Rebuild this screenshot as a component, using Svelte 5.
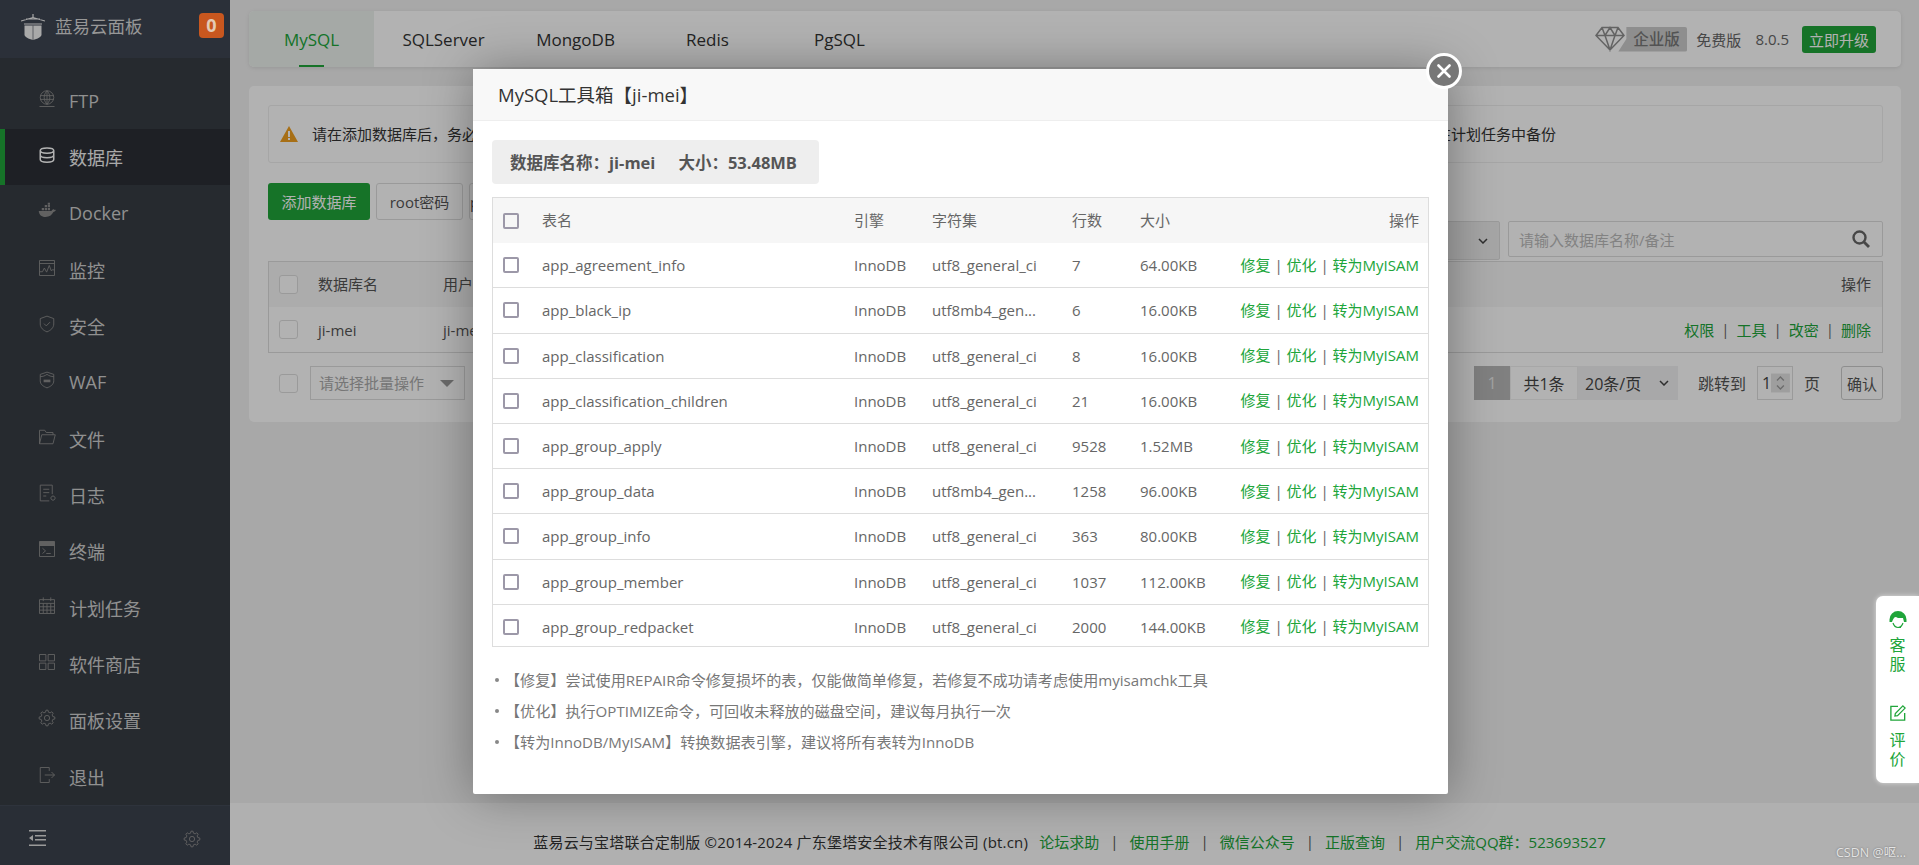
<script>
  function gear(cx = 12, cy = 12, ro = 10.5, ri = 8, n = 8) {
    let d = '';
    for (let i = 0; i < n; i++) {
      const s = (i * 2 * Math.PI) / n;
      const w = Math.PI / n;
      const pts = [[ri, s - w * 0.62], [ro, s - w * 0.32], [ro, s + w * 0.32], [ri, s + w * 0.62]];
      for (const [r, a] of pts) {
        d += (d ? 'L' : 'M') + (cx + r * Math.cos(a)).toFixed(2) + ' ' + (cy + r * Math.sin(a)).toFixed(2);
      }
    }
    return d + `zM${cx - 3.5} ${cy}a3.500 3.500 0 1 0 7 0a3.500 3.500 0 1 0-7 0z`;
  }

  const menu = [
    { name: 'FTP', d: 'M12 1a9 9 0 1 0 0 18a9 9 0 0 0 0-18zM3 7.500h18M3 12.500h18M12 1v18M12 1c-5 5-5 13 0 18M12 1c5 5 5 13 0 18M2 22h20' },
    { name: '数据库', active: true, d: 'M3 6c0-2 4-3.500 9-3.500s9 1.500 9 3.500v12c0 2-4 3.500-9 3.500s-9-1.500-9-3.500zM3 6c0 2 4 3.500 9 3.500s9-1.500 9-3.500M3 12c0 2 4 3.500 9 3.500s9-1.500 9-3.500' },
    { name: 'Docker', d: '', f: 'M1 12h17c.5-2 2-2.500 3-2.500.4 1 1.500 1.200 3 .9-.8 2-2 2.700-3.500 3C18.500 17.500 15 20 10 20 4.500 20 1.500 17 1 12zM5 8h3v3H5zM9 8h3v3H9zM13 8h3v3h-3zM9 4h3v3H9zM13 4h3v3h-3zM13 1h3v2.500h-3z' },
    { name: '监控', d: 'M2 2h20v20H2zM2 6h20M2 17h4l2.500-5 3 5.500 3.500-9 2.500 7 1.500-1h3' },
    { name: '安全', d: 'M12 1.500l9 3.300v7.200c0 5-4 8.500-9 10.500-5-2-9-5.500-9-10.500V4.800zM8 11.500l3 3 5-5' },
    { name: 'WAF', d: 'M12 1.500l9 3v8.500c0 5-4 7.500-9 9.500-5-2-9-4.500-9-9.500V4.500zM3 7.500c3.500 0 6-1 9-3 3 2 5.500 3 9 3', f: 'M7.500 11.500h9v3.500h-9z' },
    { name: '文件', d: 'M2 21V3h7l2 3h9v3M2 21l3-12h18l-3 12z' },
    { name: '日志', d: 'M3 1.500h16v12M3 1.500v21h12M7 7h8M7 11.500h8M7 16h4M20 16a2.800 2.800 0 1 0 .01 0z' },
    { name: '终端', d: 'M2 2h20v20H2zM6 11l4 3.500-4 3.500M11 18h6', f: 'M2 2h20v6H2z' },
    { name: '计划任务', d: 'M2 3.500h20v18.500H2zM2 8.500h20M2 13h20M2 17.500h20M7 .5v5M17 .5v5M7 8.500v13M12 8.500v13M17 8.500v13' },
    { name: '软件商店', d: 'M2 2h8.500v8.500H2zM13.500 2H22v8.500h-8.500zM2 13.500h8.500V22H2zM13.500 13.500H22V22h-8.500z' },
    { name: '面板设置', d: gear() },
    { name: '退出', d: 'M15 6.500V2H3v20h12v-4.500M9 12h13M18 8l4 4-4 4' }
  ];

  const tabs = ['MySQL', 'SQLServer', 'MongoDB', 'Redis', 'PgSQL'];
  const rows = [
    ['app_agreement_info', 'utf8_general_ci', '7', '64.00KB'],
    ['app_black_ip', 'utf8mb4_gen...', '6', '16.00KB'],
    ['app_classification', 'utf8_general_ci', '8', '16.00KB'],
    ['app_classification_children', 'utf8_general_ci', '21', '16.00KB'],
    ['app_group_apply', 'utf8_general_ci', '9528', '1.52MB'],
    ['app_group_data', 'utf8mb4_gen...', '1258', '96.00KB'],
    ['app_group_info', 'utf8_general_ci', '363', '80.00KB'],
    ['app_group_member', 'utf8_general_ci', '1037', '112.00KB'],
    ['app_group_redpacket', 'utf8_general_ci', '2000', '144.00KB']
  ];
  const notes = [
    '【修复】尝试使用REPAIR命令修复损坏的表，仅能做简单修复，若修复不成功请考虑使用myisamchk工具',
    '【优化】执行OPTIMIZE命令，可回收未释放的磁盘空间，建议每月执行一次',
    '【转为InnoDB/MyISAM】转换数据表引擎，建议将所有表转为InnoDB'
  ];
  const footLinks = ['论坛求助', '使用手册', '微信公众号', '正版查询'];
  const gearPath = gear();
</script>

<div class="page">
  <aside class="side">
    <div class="brand">
      <svg class="logo" viewBox="0 0 24 26" width="24" height="26">
        <path d="M0 7 12 3.500 24 7M3 10h18M12 0v3.500M5 5h14" fill="none" stroke="#f2f2f2" stroke-width="1.200" />
        <path d="M3.500 11.500h17v9c0 2.500-4 4.500-8.500 5.500-4.500-1-8.500-3-8.500-5.500z" fill="#f2f2f2" />
        <path d="M12 11.500V26" stroke="#3d4453" stroke-width=".6" />
      </svg>
      <span class="brand-name">蓝易云面板</span>
      <span class="badge">0</span>
    </div>
    <nav class="menu">
      {#each menu as m}
        <div class="item" class:active={m.active}>
          <svg class="ico" viewBox="0 0 24 24" width="18" height="18">
            {#if m.f}<path d={m.f} class="solid" />{/if}
            {#if m.d}<path d={m.d} class="line" />{/if}
          </svg>
          <span>{m.name}</span>
        </div>
      {/each}
    </nav>
    <div class="side-foot">
      <svg viewBox="0 0 17 17" width="17" height="17">
        <path d="M0 0h17v1.500H0zM6 5h11v1.500H6zM6 9h11v1.500H6zM0 14.500h17V16H0zM4 5v6L0 8z" fill="#ddd" />
      </svg>
      <svg viewBox="0 0 24 24" width="18" height="18"><path d={gearPath} class="line" /></svg>
    </div>
  </aside>

  <main class="main">
    <div class="body">
      <header class="topbar">
        <div class="tabs">
          {#each tabs as t, i}
            <div class="tab" class:on={i === 0}>{t}</div>
          {/each}
        </div>
        <div class="ver">
          <div class="ent">
            <svg viewBox="0 0 30 26" width="30" height="26">
              <path d="M7 1.500h16l6 8-14 14.500L1 9.500zM1 9.500h28M10 9.500 15 24l5-14.500M7 1.500l3 8 5-8 5 8 3-8" fill="#fff" stroke="#8f8f8f" stroke-width="1.500" />
            </svg>
            <span class="ent-tag">企业版</span>
          </div>
          <span class="free">免费版</span>
          <span class="num">8.0.5</span>
          <button class="upgrade">立即升级</button>
        </div>
      </header>

      <section class="card">
        <div class="alert">
          <svg viewBox="0 0 18 16" width="18" height="16"><path d="M9 0l9 16H0z" fill="#f0a020" /><path d="M8 5h2v6H8zM8 12h2v2H8z" fill="#fff" /></svg>
          <span class="up">请在添加数据库后，务必</span>
          <span class="tail up">在计划任务中备份</span>
        </div>
        <div class="btns">
          <button class="primary">添加数据库</button>
          <button class="plain">root密码</button>
          <button class="plain">phpMyAdmin</button>
        </div>
        <div class="filter">
          <div class="cat"><svg viewBox="0 0 10 6" width="10" height="6"><path d="M1 1l4 4 4-4" fill="none" stroke="#444" stroke-width="1.500" /></svg></div>
          <div class="search">
            <span>请输入数据库名称/备注</span>
            <svg viewBox="0 0 18 18" width="18" height="18"><circle cx="7.500" cy="7.500" r="6" fill="none" stroke="#666" stroke-width="2.400" /><path d="M12 12l5 5" stroke="#666" stroke-width="2.800" /></svg>
          </div>
        </div>
        <div class="dbtable">
          <div class="dbrow head">
            <i class="box"></i><span class="c-name up">数据库名</span><span class="c-user up">用户名</span><span class="c-op up">操作</span>
          </div>
          <div class="dbrow">
            <i class="box"></i><span class="c-name">ji-mei</span><span class="c-user">ji-mei</span>
            <span class="c-op links"><a href="#a">权限</a><b>|</b><a href="#a">工具</a><b>|</b><a href="#a">改密</a><b>|</b><a href="#a">删除</a></span>
          </div>
        </div>
        <div class="pager">
          <i class="box"></i>
          <div class="batch"><span class="up">请选择批量操作</span><em></em></div>
          <div class="pages">
            <span class="cur">1</span>
            <span class="total">共1条</span>
            <span class="size">20条/页<svg viewBox="0 0 10 6" width="10" height="6"><path d="M1 1l4 4 4-4" fill="none" stroke="#444" stroke-width="1.500" /></svg></span>
            <span class="jump">跳转到</span>
            <span class="pageinput">1<svg viewBox="0 0 22 22" width="22" height="22"><path d="M0 0h22v22H0z" fill="#e2e2e2" /><path d="M7 8l4-4 4 4M7 14l4 4 4-4" fill="none" stroke="#999" stroke-width="1.500" /></svg></span>
            <span class="ye">页</span>
            <button class="ok">确认</button>
          </div>
        </div>
      </section>
    </div>
    <footer class="foot">
      <span class="foot-main">蓝易云与宝塔联合定制版 ©2014-2024 广东堡塔安全技术有限公司 (bt.cn)</span>
      {#each footLinks as l}
        <a href="#f">{l}</a><b>|</b>
      {/each}
      <a href="#f">用户交流QQ群：523693527</a>
    </footer>
  </main>

  <div class="shade"></div>

  <div class="dialog">
    <div class="dlg-title">MySQL工具箱【ji-mei】</div>
    <button class="close" aria-label="关闭">
      <svg viewBox="0 0 14 14" width="14" height="14"><path d="M1.500 1.500l11 11M12.500 1.500l-11 11" stroke="#fff" stroke-width="2.600" stroke-linecap="round" /></svg>
    </button>
    <div class="dlg-body">
      <div class="info">
        <span>数据库名称：ji-mei</span>
        <span>大小：53.48MB</span>
      </div>
      <div class="tool">
        <div class="trow thead">
          <i class="cb"></i><span class="up">表名</span><span class="up">引擎</span><span class="up">字符集</span><span class="up">行数</span><span class="up">大小</span><span class="op up">操作</span>
        </div>
        {#each rows as r}
          <div class="trow">
            <i class="cb"></i><span>{r[0]}</span><span>InnoDB</span><span>{r[1]}</span><span>{r[2]}</span><span>{r[3]}</span>
            <span class="op up"><a href="#t">修复</a> | <a href="#t">优化</a> | <a href="#t">转为MyISAM</a></span>
          </div>
        {/each}
      </div>
      <ul class="notes">
        {#each notes as n}<li>{n}</li>{/each}
      </ul>
    </div>
  </div>

  <aside class="float">
    <div class="fl-item">
      <svg viewBox="0 0 18 18" width="18" height="18">
        <path d="M9 0a8.500 8.500 0 0 0-8.500 8.500V11h2.500c1-3 2-5 4-5 2 1.500 5 1 7 1l1 4h2.500V8.500A8.500 8.500 0 0 0 9 0z" fill="#20a53a" />
        <path d="M4 12c1 3 3 4.500 5 4.500s4-1.500 5-4.500M9 16.500h3" fill="none" stroke="#20a53a" stroke-width="1.200" />
      </svg>
      <span>客<br />服</span>
    </div>
    <div class="fl-item">
      <svg viewBox="0 0 18 18" width="16" height="16">
        <path d="M9 1.500H1v15.500h15.500V9" fill="none" stroke="#20a53a" stroke-width="1.500" />
        <path d="M14.500 1 17 3.500 8.500 12 5.500 12.500 6 9.500z" fill="none" stroke="#20a53a" stroke-width="1.400" />
      </svg>
      <span>评<br />价</span>
    </div>
  </aside>

  <div class="mark">CSDN @呕...</div>
</div>

<style>
  :global(body) {
    margin: 0;
    overflow: hidden;
  }
  .page {
    width: 1919px;
    height: 865px;
    display: flex;
    position: relative;
    overflow: hidden;
    font-family: "Open Sans", "Noto Sans CJK SC", sans-serif;
    font-size: 15px;
    color: #555;
    background: #f1f1f1;
  }
  a {
    text-decoration: none;
  }
  button {
    font: inherit;
    cursor: pointer;
  }
  .up {
    margin-top: -2px;
  }

  /* sidebar */
  .side {
    width: 230px;
    flex: none;
    display: flex;
    flex-direction: column;
    background: #373d44;
  }
  .brand {
    height: 58px;
    flex: none;
    padding: 0 6px 0 21px;
    display: flex;
    align-items: center;
    background: #3e4552;
    box-sizing: border-box;
  }
  .logo {
    flex: none;
    margin-top: -5px;
  }
  .brand-name {
    margin-left: 10px;
    margin-top: -8px;
    font-size: 17.500px;
    color: #d8d8d8;
  }
  .badge {
    position: relative;
    z-index: 3;
    margin: -8px 0 0 auto;
    width: 25px;
    height: 25px;
    line-height: 25px;
    text-align: center;
    border-radius: 4px;
    background: #c8571f;
    color: #e4cbb6;
    font-size: 18px;
    font-weight: 700;
  }
  .menu {
    flex: 1;
    padding-top: 14.500px;
  }
  .item {
    height: 56.33px;
    padding-left: 38px;
    display: flex;
    align-items: center;
    box-sizing: border-box;
    font-size: 18px;
    color: #cfcfcf;
  }
  .item span {
    margin-left: 13px;
  }
  .ico {
    flex: none;
    margin-top: -4px;
  }
  .line {
    fill: none;
    stroke: #8c8c8c;
    stroke-width: 1.200;
  }
  .solid {
    fill: #8c8c8c;
  }
  .item.active {
    background: #2b2f36;
    border-left: 5px solid #20a53a;
    padding-left: 33px;
    color: #f2f2f2;
  }
  .item.active .line {
    stroke: #fff;
    stroke-width: 2;
  }
  .side-foot {
    height: 62px;
    flex: none;
    padding: 5px 29px 0;
    display: flex;
    justify-content: space-between;
    align-items: center;
    box-sizing: border-box;
    background: #3c424e;
    border-top: 1px solid #434a56;
  }

  /* main */
  .main {
    flex: 1;
    display: flex;
    flex-direction: column;
    min-width: 0;
  }
  .body {
    flex: 1;
    padding: 11px 18px 0 19px;
  }
  .topbar {
    height: 56px;
    display: flex;
    justify-content: space-between;
    align-items: center;
    padding-right: 25px;
    background: #fff;
    border-radius: 5px;
    box-shadow: 0 1px 4px rgba(0, 0, 0, 0.1);
  }
  .tabs {
    display: flex;
    gap: 7px;
    height: 100%;
  }
  .tab {
    width: 125px;
    display: flex;
    align-items: center;
    justify-content: center;
    font-size: 17px;
    color: #333;
    box-sizing: border-box;
  }
  .tab.on {
    position: relative;
    color: #20a53a;
    background: #ecf3ee;
    border-radius: 5px 0 0 5px;
  }
  .tab.on::after {
    content: "";
    position: absolute;
    left: 50px;
    bottom: 0;
    width: 25px;
    height: 2px;
    background: #20a53a;
  }
  .ver {
    display: flex;
    align-items: center;
    font-size: 15px;
    color: #666;
  }
  .ent {
    display: flex;
    align-items: center;
    position: relative;
  }
  .ent svg {
    position: relative;
    z-index: 1;
  }
  .ent-tag {
    margin-left: -7px;
    padding: 0 7px 0 15px;
    height: 25px;
    line-height: 25px;
    width: 47px;
    background: #cccccc;
    color: #777;
    font-size: 15.500px;
    font-weight: 500;
    box-sizing: content-box;
    border-radius: 0 2px 2px 0;
    clip-path: polygon(8px 0, 100% 0, 100% 100%, 0 100%, 8px 50%);
  }
  .free {
    margin-left: 9px;
  }
  .num {
    margin-left: 14px;
  }
  .upgrade {
    margin-left: 13px;
    width: 74px;
    height: 27px;
    padding: 0;
    border: 0;
    border-radius: 3px;
    background: #20a53a;
    color: #fff;
    font-size: 15px;
  }

  .card {
    margin-top: 19px;
    height: 336px;
    padding: 19px 18px 0 19px;
    box-sizing: border-box;
    background: #fff;
    border-radius: 5px;
  }
  .alert {
    height: 58px;
    padding: 0 326px 0 11px;
    display: flex;
    align-items: center;
    gap: 14px;
    border: 1px solid #eee;
    border-radius: 3px;
    box-sizing: border-box;
    background: #fff;
    color: #333;
  }
  .tail {
    margin-left: auto;
  }
  .btns {
    margin-top: 20px;
    display: flex;
    gap: 6px;
    height: 37px;
  }
  .btns button {
    height: 37px;
    padding: 0;
    border-radius: 3px;
    font-size: 15px;
  }
  .primary {
    width: 102px;
    border: 0;
    background: #20a53a;
    color: #fff;
  }
  .plain {
    width: 87px;
    border: 1px solid #ddd;
    background: #fff;
    color: #555;
  }
  .filter {
    height: 41px;
    display: flex;
    justify-content: flex-end;
    gap: 8px;
    align-items: flex-start;
    padding-top: 1px;
    box-sizing: border-box;
  }
  .cat {
    width: 120px;
    height: 39px;
    display: flex;
    align-items: center;
    justify-content: flex-end;
    padding-right: 11px;
    box-sizing: border-box;
    background: #eee;
    border: 1px solid #ddd;
    border-radius: 2px;
  }
  .search {
    width: 375px;
    height: 36px;
    padding: 0 12px 0 10px;
    display: flex;
    justify-content: space-between;
    align-items: center;
    border: 1px solid #ddd;
    box-sizing: border-box;
    border-radius: 2px;
    color: #bbb;
  }
  .dbtable {
    border: 1px solid #ddd;
  }
  .dbrow {
    height: 45px;
    display: flex;
    align-items: center;
    padding: 0 11px 0 10px;
    position: relative;
  }
  .dbrow.head {
    background: #f6f6f6;
  }
  .box {
    flex: none;
    width: 19px;
    height: 19px;
    border: 1px solid #ddd;
    border-radius: 3px;
    box-sizing: border-box;
    background: #fff;
  }
  .c-name {
    margin-left: 20px;
    width: 125px;
  }
  .c-user {
    flex: 1;
  }
  .links {
    display: flex;
    gap: 7px;
    color: #666;
  }
  .links a {
    color: #20a53a;
  }
  .links b {
    font-weight: 400;
  }
  .pager {
    margin-top: 13px;
    height: 34px;
    display: flex;
    align-items: center;
    padding-left: 11px;
  }
  .batch {
    margin-left: 12px;
    width: 155px;
    height: 34px;
    padding: 0 10px 0 8px;
    display: flex;
    align-items: center;
    justify-content: space-between;
    border: 1px solid #ddd;
    box-sizing: border-box;
    color: #aaa;
  }
  .batch em {
    border: 7px solid transparent;
    border-top-color: #999;
    border-bottom: 0;
  }
  .pages {
    margin-left: auto;
    display: flex;
    align-items: center;
    height: 34px;
  }
  .pages > span {
    height: 34px;
    display: flex;
    align-items: center;
    box-sizing: border-box;
    font-size: 16px;
  }
  .cur {
    width: 36px;
    justify-content: center;
    background: #b8b8b8;
    color: #e8e8e8;
  }
  .total {
    width: 68px;
    justify-content: center;
    border: 1px solid #f0f0f0;
    color: #444;
  }
  .size {
    width: 100px;
    justify-content: space-between;
    padding: 0 9px 0 7px;
    background: #f1f1f3;
    color: #444;
  }
  .jump {
    margin-left: 20px;
    width: 48px;
    white-space: nowrap;
  }
  .pageinput {
    width: 36px;
    margin-left: 11px;
    padding: 0 2px 0 4px;
    border: 1px solid #ddd;
    justify-content: space-between;
    color: #444;
  }
  .ye {
    margin-left: 11px;
    width: 16px;
  }
  .ok {
    margin-left: 21px;
    width: 42px;
    height: 34px;
    padding: 0;
    border: 1px solid #ccc;
    border-radius: 3px;
    background: #fff;
    color: #555;
    font-size: 15px;
  }

  .foot {
    height: 62px;
    flex: none;
    display: flex;
    align-items: center;
    justify-content: center;
    gap: 11px;
    padding: 14px 10px 0 0;
    box-sizing: border-box;
    background: #fcfcfc;
    color: #333;
    font-size: 15px;
    white-space: nowrap;
  }
  .foot-main {
    letter-spacing: 0.2px;
  }
  .foot a {
    color: #20a53a;
  }
  .foot b {
    font-weight: 400;
    color: #555;
  }

  /* overlays */
  .shade {
    position: absolute;
    inset: 0;
    z-index: 2;
    background: rgba(0, 0, 0, 0.3);
  }
  .dialog {
    position: absolute;
    z-index: 4;
    left: 473px;
    top: 69px;
    width: 975px;
    height: 725px;
    background: #fff;
    border-radius: 2px;
    box-shadow: 1px 1px 50px rgba(0, 0, 0, 0.35);
  }
  .dlg-title {
    height: 52px;
    line-height: 52px;
    padding-left: 25px;
    font-size: 18.500px;
    color: #333;
    background: #f8f8f8;
    border-bottom: 1px solid #eee;
    box-sizing: border-box;
  }
  .close {
    position: absolute;
    right: -14px;
    top: -16px;
    width: 36px;
    height: 36px;
    padding: 0;
    display: flex;
    align-items: center;
    justify-content: center;
    border: 3px solid #fff;
    border-radius: 50%;
    background: #777;
    box-sizing: border-box;
  }
  .dlg-body {
    padding: 19px 19px 0;
  }
  .info {
    width: 327px;
    height: 44px;
    padding-left: 18px;
    display: flex;
    gap: 23px;
    align-items: center;
    box-sizing: border-box;
    background: #eee;
    border-radius: 4px;
    font-size: 16.500px;
    font-weight: 700;
    color: #555;
  }
  .tool {
    margin-top: 13px;
    height: 450px;
    overflow: hidden;
    border: 1px solid #ddd;
    box-sizing: border-box;
  }
  .trow {
    height: 45.2px;
    display: grid;
    grid-template-columns: 49px 312px 78px 140px 68px 100px 1fr;
    align-items: center;
    border-bottom: 1px solid #ddd;
    box-sizing: border-box;
    font-size: 15px;
    color: #666;
    white-space: nowrap;
  }
  .thead {
    background: #f6f6f6;
    border-bottom: 0;
  }
  .cb {
    margin-left: 10px;
    width: 16px;
    height: 16px;
    border: 2px solid #9c98a8;
    border-radius: 2px;
    box-sizing: border-box;
  }
  .op {
    text-align: right;
    padding-right: 9px;
  }
  .op a {
    color: #20a53a;
  }
  .notes {
    margin: 17px 0 0;
    padding: 0;
    list-style: none;
    color: #777;
    font-size: 15.100px;
  }
  .notes li {
    height: 31px;
    line-height: 26px;
    display: flex;
    align-items: center;
    gap: 6px;
    white-space: nowrap;
  }
  .notes li::before {
    content: "";
    flex: none;
    margin-left: 3px;
    width: 4px;
    height: 4px;
    border-radius: 50%;
    background: #888;
  }

  .float {
    position: absolute;
    z-index: 4;
    left: 1876px;
    top: 596px;
    width: 43px;
    height: 187px;
    padding-top: 15px;
    box-sizing: border-box;
    background: #fff;
    border-radius: 7px 0 0 7px;
    box-shadow: 0 0 5px rgba(255, 255, 255, 0.6);
    display: flex;
    flex-direction: column;
    gap: 32px;
  }
  .fl-item {
    display: flex;
    flex-direction: column;
    align-items: center;
    gap: 7px;
    font-size: 16px;
    line-height: 18.500px;
    color: #20a53a;
    text-align: center;
  }
  .fl-item:last-child {
    gap: 10px;
  }
  .mark {
    position: absolute;
    z-index: 4;
    left: 1836px;
    top: 842px;
    font-size: 12.500px;
    color: #e4e4e4;
    text-shadow: 0 0 2px #666;
  }
</style>
